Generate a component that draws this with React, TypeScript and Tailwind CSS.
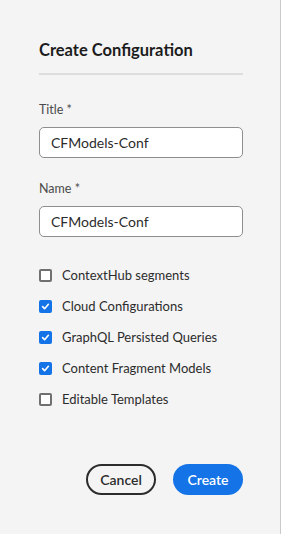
import { useState } from 'react'

const OPTIONS = [
  { label: 'ContextHub segments', checked: false },
  { label: 'Cloud Configurations', checked: true },
  { label: 'GraphQL Persisted Queries', checked: true },
  { label: 'Content Fragment Models', checked: true },
  { label: 'Editable Templates', checked: false },
]

function Field({ label, value }: { label: string; value: string }) {
  return (
    <div className="flex flex-col">
      <label className="text-[12.5px] leading-4 text-[#4b4b4b] mb-[9px]">{label}</label>
      <input
        defaultValue={value}
        className="h-[31px] w-full rounded-[5px] border border-[#8e8e8e] bg-white px-[11px] text-[14px] text-[#2c2c2c] outline-none"
      />
    </div>
  )
}

function Check({ label, checked }: { label: string; checked: boolean }) {
  const [on, setOn] = useState(checked)
  return (
    <button onClick={() => setOn(!on)} className="flex h-[31px] items-center gap-[10px] text-left">
      {on ? (
        <span className="flex h-[13px] w-[13px] items-center justify-center rounded-[2px] bg-[#1473e6]">
          <svg width="9" height="9" viewBox="0 0 10 10" fill="none">
            <path d="M1.8 5.2 L4 7.4 L8.2 2.6" stroke="white" strokeWidth="1.8" strokeLinecap="round" strokeLinejoin="round" />
          </svg>
        </span>
      ) : (
        <span className="h-[13px] w-[13px] rounded-[2px] border-2 border-[#707070] bg-white" />
      )}
      <span className="text-[13px] text-[#2c2c2c]">{label}</span>
    </button>
  )
}

export default function App() {
  return (
    <div className="flex h-[534px] w-[283px] bg-white" style={{ fontFamily: 'Lato, "Open Sans", sans-serif' }}>
      <div className="flex h-full w-[281px] flex-col border-r border-[#cacaca] bg-[#f4f4f4] pl-[39px] pr-[37px]">
        <h1 className="mt-[38px] text-[16.5px] font-bold leading-6 text-[#1c1c1c]">Create Configuration</h1>
        <div className="mt-[11px] h-[2px] bg-[#dddddd]" />
        <div className="mt-[27px] flex flex-col gap-[23px]">
          <Field label="Title *" value="CFModels-Conf" />
          <Field label="Name *" value="CFModels-Conf" />
        </div>
        <div className="mt-[23px] flex flex-col">
          {OPTIONS.map((o) => (
            <Check key={o.label} label={o.label} checked={o.checked} />
          ))}
        </div>
        <div className="mt-[49px] flex justify-end gap-[17px]">
          <button className="h-[31px] w-[70px] rounded-full border-2 border-[#2c2c2c] text-[14px] font-semibold text-[#2c2c2c]">
            Cancel
          </button>
          <button className="h-[31px] w-[70px] rounded-full bg-[#1473e6] text-[14px] font-semibold text-white">
            Create
          </button>
        </div>
      </div>
    </div>
  )
}
